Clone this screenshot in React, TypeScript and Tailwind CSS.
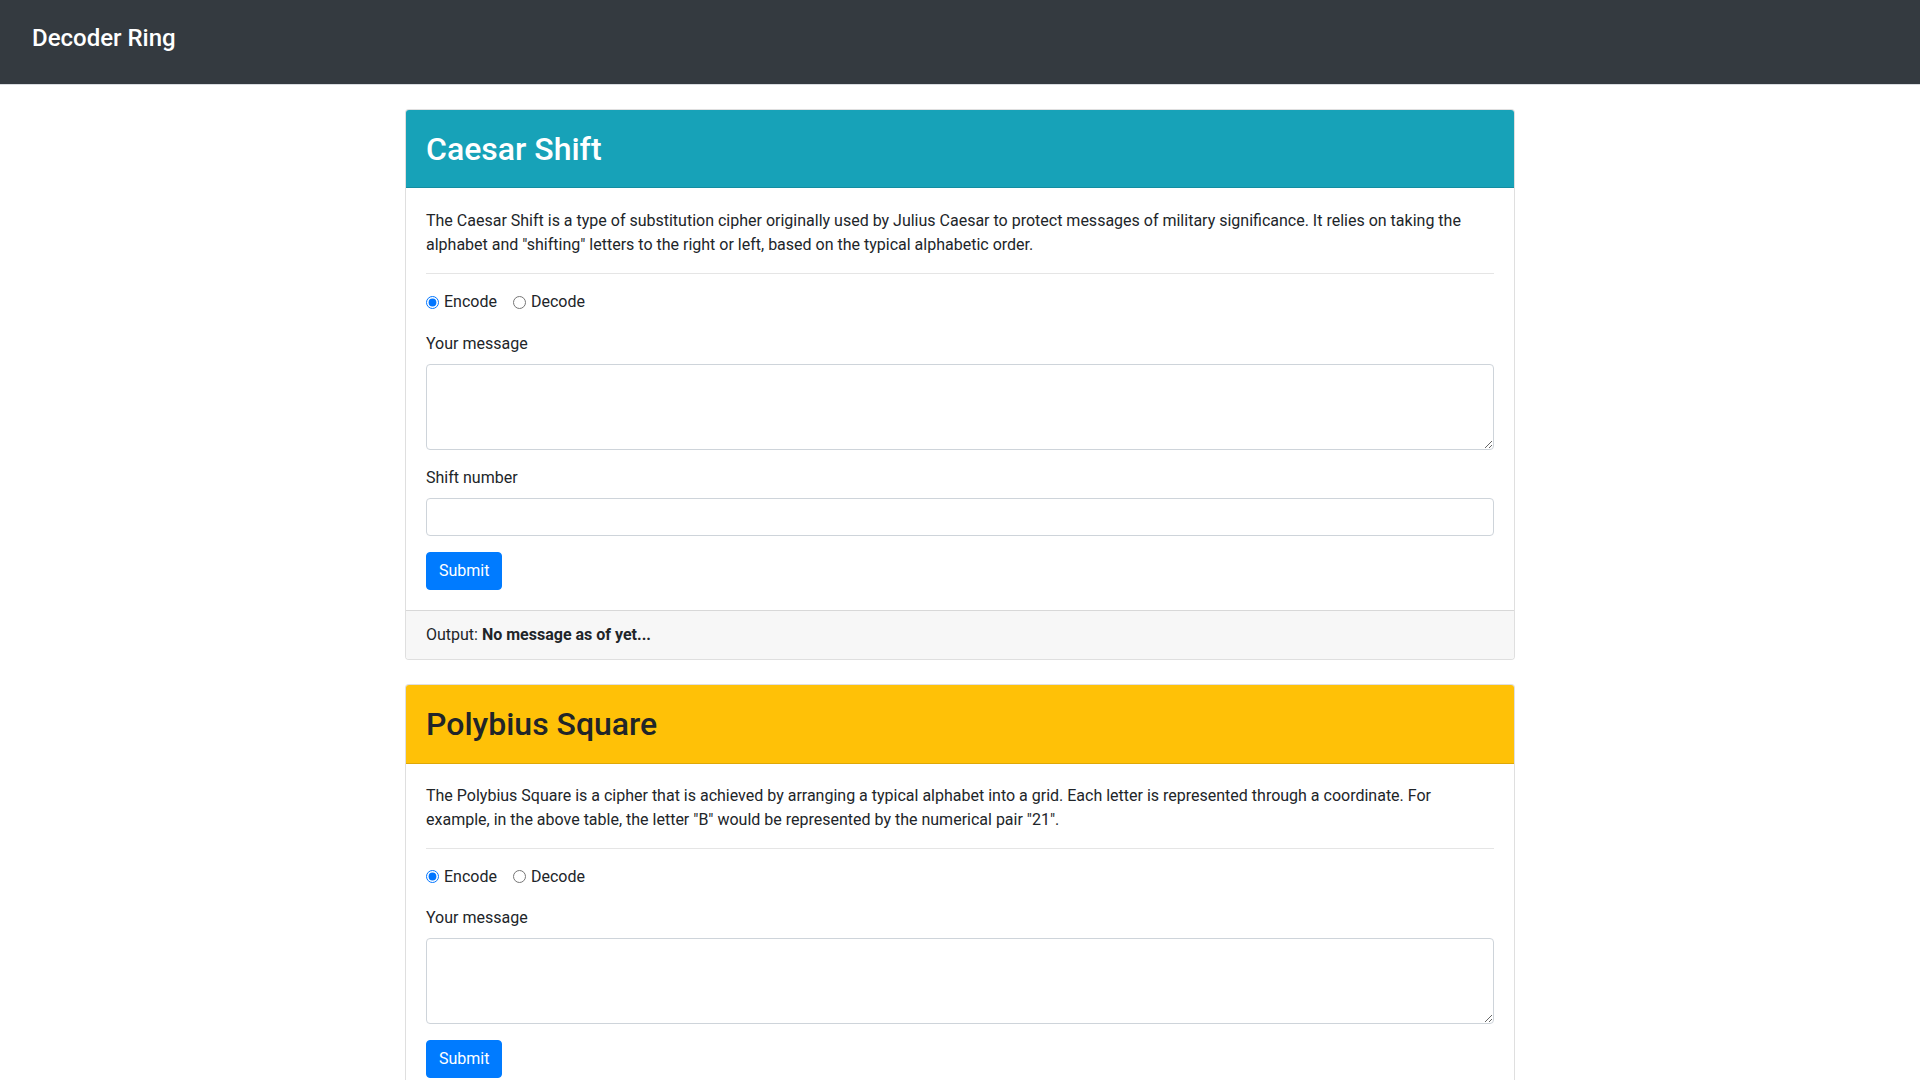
import React from "react";

function Radios({ name, gapClass }: { name: string; gapClass: string }) {
  return (
    <div className={`h-[24px] leading-6 ${gapClass}`}>
      <label className="inline-flex items-center mr-3 align-top">
        <input type="radio" name={name} defaultChecked className="m-0 mr-[5px] w-[13px] h-[13px]" />
        <span>Encode</span>
      </label>{" "}
      <label className="inline-flex items-center mr-3 align-top">
        <input type="radio" name={name} className="m-0 mr-[5px] w-[13px] h-[13px]" />
        <span>Decode</span>
      </label>
    </div>
  );
}

function Card({
  title,
  headerClass,
  bodyClass,
  gapClass,
  text,
  name,
  shift,
  footer,
}: {
  title: string;
  headerClass: string;
  bodyClass: string;
  gapClass: string;
  text: string;
  name: string;
  shift?: boolean;
  footer?: boolean;
}) {
  return (
    <div className="w-[1110px] mx-auto mb-[24px] border border-black/[.125] rounded-[4px] bg-white">
      <div className={`pl-5 pr-5 pt-[20px] pb-[19px] border-b border-black/[.125] rounded-t-[3px] ${headerClass}`}>
        <h2 className="text-[32px] leading-[38.4px] font-medium">{title}</h2>
      </div>
      <div className={`px-5 pb-5 ${bodyClass}`}>
        <p className="leading-6 mb-4">{text}</p>
        <hr className="border-0 border-t border-black/10 mb-4" />
        <Radios name={name} gapClass={gapClass} />
        <label className="block leading-6 mb-2">Your message</label>
        <textarea
          rows={3}
          className="block w-full h-[86px] border border-[#ced4da] rounded-[4px] px-3 py-[6px] leading-6 mb-4 bg-white resize-y"
        />
        {shift && (
          <>
            <label className="block leading-6 mb-2">Shift number</label>
            <input
              type="number"
              className="block w-full h-[38px] border border-[#ced4da] rounded-[4px] px-3 py-[6px] leading-6 mb-4 bg-white [appearance:textfield] [&::-webkit-inner-spin-button]:appearance-none"
            />
          </>
        )}
        <button className="h-[38px] px-3 bg-[#007bff] text-white border border-[#007bff] rounded-[4px] leading-6">
          Submit
        </button>
      </div>
      {footer && (
        <div className="px-5 py-3 leading-6 bg-[#f7f7f7] border-t border-black/[.125] rounded-b-[3px]">
          Output: <strong className="font-bold">No message as of yet...</strong>
        </div>
      )}
    </div>
  );
}

export default function App() {
  return (
    <div className="min-h-screen bg-white text-[#212529] text-[16px] font-['Roboto',sans-serif]">
      <nav className="h-[85px] bg-[#343a40] border-b border-[#d9dce0]">
        <div className="pl-[32px] pt-[24px] text-white text-[24px] leading-[28.8px] font-medium">
          Decoder Ring
        </div>
      </nav>
      <main className="pt-[24px]">
        <Card
          title="Caesar Shift"
          headerClass="bg-[#17a2b8] text-white"
          bodyClass="pt-[21px]"
          gapClass="mb-[18px]"
          text={'The Caesar Shift is a type of substitution cipher originally used by Julius Caesar to protect messages of military significance. It relies on taking the alphabet and "shifting" letters to the right or left, based on the typical alphabetic order.'}
          name="caesar"
          shift
          footer
        />
        <Card
          title="Polybius Square"
          headerClass="bg-[#ffc107] text-[#212529]"
          bodyClass="pt-[20px]"
          gapClass="mb-[17px]"
          text={'The Polybius Square is a cipher that is achieved by arranging a typical alphabet into a grid. Each letter is represented through a coordinate. For example, in the above table, the letter "B" would be represented by the numerical pair "21".'}
          name="polybius"
        />
      </main>
    </div>
  );
}
